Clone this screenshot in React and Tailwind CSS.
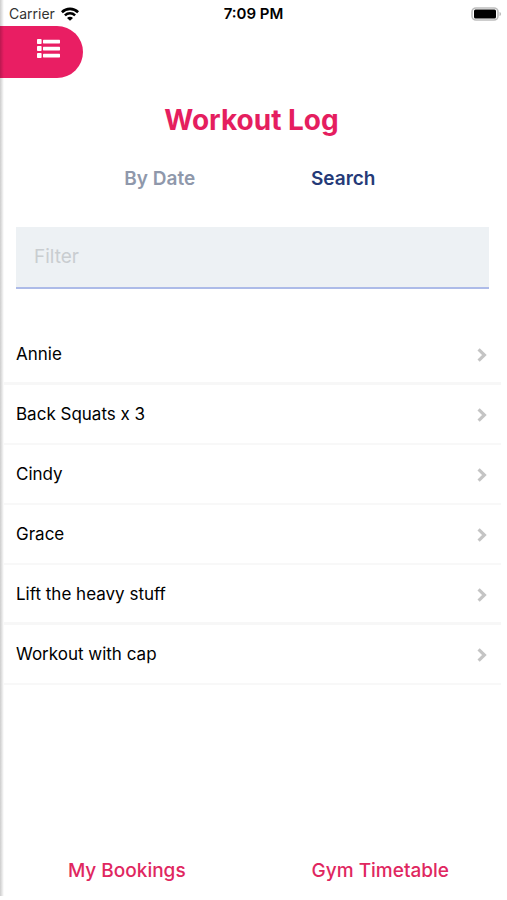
import React, { useState } from "react";

const workouts = [
  { name: "Annie", divider: "thick" },
  { name: "Back Squats x 3", divider: "thin" },
  { name: "Cindy", divider: "thin" },
  { name: "Grace", divider: "thin" },
  { name: "Lift the heavy stuff", divider: "thick" },
  { name: "Workout with cap", divider: "thin" },
];

function WifiIcon() {
  return (
    <svg width="18" height="14" viewBox="0 0 18 14" fill="none" stroke="#000">
      <path d="M0.9 5.2C5.5 0.7 12.5 0.7 17.1 5.2" strokeWidth="2.6" />
      <path d="M3.9 8.4C6.8 5.6 11.2 5.6 14.1 8.4" strokeWidth="2.5" />
      <path d="M9 13.8L6 10.9C7.7 9.3 10.3 9.3 12 10.9Z" fill="#000" stroke="none" />
    </svg>
  );
}

function BatteryIcon() {
  return (
    <svg width="31" height="14" viewBox="0 0 31 14">
      <rect x="1" y="1" width="26" height="12" rx="4" fill="#fff" stroke="#bdbdbd" strokeWidth="1.6" />
      <rect x="3" y="2.5" width="22" height="9" rx="1.5" fill="#000" />
      <path d="M28.5 5C30.6 5.6 30.6 8.4 28.5 9Z" fill="#bdbdbd" />
    </svg>
  );
}

function ListIcon() {
  return (
    <svg width="23" height="19" viewBox="0 0 23 19" fill="#fff">
      <rect x="0" y="0" width="4.6" height="5" rx="0.8" />
      <rect x="0" y="7" width="4.6" height="5" rx="0.8" />
      <rect x="0" y="14" width="4.6" height="5" rx="0.8" />
      <rect x="6" y="0.8" width="17" height="3.6" rx="0.6" />
      <rect x="6" y="7.8" width="17" height="3.6" rx="0.6" />
      <rect x="6" y="14.8" width="17" height="3.6" rx="0.6" />
    </svg>
  );
}

function ChevronIcon() {
  return (
    <svg width="10" height="14" viewBox="0 0 10 14" fill="none">
      <path d="M1.6 1.4L7.4 7L1.6 12.6" stroke="#c4c4c4" strokeWidth="3.2" />
    </svg>
  );
}

function App() {
  const [tab, setTab] = useState("search");
  const [filter, setFilter] = useState("");

  const visible = workouts.filter((workout) =>
    workout.name.toLowerCase().includes(filter.toLowerCase())
  );

  return (
    <div className="relative flex flex-col min-h-screen bg-white font-['Inter',sans-serif] text-black">
      {/* Status bar */}
      <div className="grid grid-cols-3 items-center h-[26px] pt-px pl-[9px] pr-[9px] text-sm">
        <div className="flex items-center gap-1.5 text-[#333333]">
          <span>Carrier</span>
          <WifiIcon />
        </div>
        <span className="text-center text-[15px] font-semibold">7:09 PM</span>
        <div className="flex justify-end -mr-1">
          <BatteryIcon />
        </div>
      </div>

      <button
        type="button"
        aria-label="Menu"
        className="flex items-center justify-end w-[83px] h-[52px] pr-[23px] pb-2 rounded-r-full bg-[#e91e63]"
      >
        <ListIcon />
      </button>

      <main className="flex-1 pr-1">
        <h1 className="mt-6 text-center text-[28px] leading-9 font-bold text-[#e51e5f]">
          Workout Log
        </h1>

        <div className="grid grid-cols-2 mt-[27px] px-[68px] text-[19px] leading-7 font-semibold">
          <button
            type="button"
            onClick={() => setTab("date")}
            className={tab === "date" ? "text-[#253a78]" : "text-[#8f98ab]"}
          >
            By Date
          </button>
          <button
            type="button"
            onClick={() => setTab("search")}
            className={tab === "search" ? "text-[#253a78]" : "text-[#8f98ab]"}
          >
            Search
          </button>
        </div>

        <div className="mt-[34px] pl-4 pr-[14px]">
          <input
            type="text"
            aria-label="Filter"
            placeholder="Filter"
            value={filter}
            onChange={(e) => setFilter(e.target.value)}
            className="block w-full h-[62px] px-[18px] pb-0.5 text-[19px] rounded-none border-b-2 border-[#adbbe8] bg-[#edf1f4] placeholder:text-[#c9cdd0] focus:outline-none"
          />
        </div>

        <ul className="mt-[36px] ml-1 mr-0.5">
          {visible.map((workout) => (
            <li key={workout.name}>
              <button
                type="button"
                className={`flex items-center justify-between w-full h-[60px] pt-0.5 pl-3 pr-[14px] text-left text-[17px] ${
                  workout.divider === "thick"
                    ? "border-b-[3px] border-[#f7f7f7]"
                    : "border-b-2 border-[#f8f8f8]"
                }`}
              >
                {workout.name}
                <ChevronIcon />
              </button>
            </li>
          ))}
        </ul>
      </main>

      <footer className="grid grid-cols-2 pb-[15px] text-[19px] leading-7 font-medium text-[#e0275f]">
        <a href="#bookings" className="text-center">
          My Bookings
        </a>
        <a href="#timetable" className="text-center">
          Gym Timetable
        </a>
      </footer>

      {/* Shadow cast by the closed drawer */}
      <div className="absolute left-0 top-0 bottom-1 w-1 bg-gradient-to-r from-black/20 to-transparent pointer-events-none" />
    </div>
  );
}

export default App;
